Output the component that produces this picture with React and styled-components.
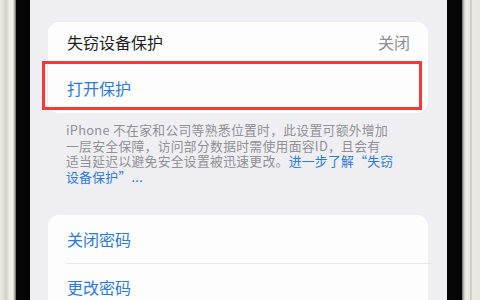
import React from "react";
import styled, { createGlobalStyle } from "styled-components";

const GlobalStyle = createGlobalStyle`
    html, body {
        margin: 0;
        padding: 0;
        background: #efeff3;
    }
    body {
        font-family: "Noto Sans CJK SC", "Noto Sans", sans-serif;
    }
`;

const Phone = styled.div`
    display: flex;
    width: 480px;
    height: 300px;
    overflow: hidden;
`;

const Frame = styled.div`
    width: ${({ w }) => w}px;
    flex-shrink: 0;
    background: ${({ side }) =>
        side === "left"
            ? "linear-gradient(90deg, #ece9e2 0px, #e2ded6 4px, #cfccc6 6px, #eeebe5 9px, #f2f0ec 13px, #9a9895 15px, #5a5a5a 16px)"
            : "linear-gradient(90deg, #6a6a6a 0px, #c9c7c3 2px, #efede8 4px, #e6e3dc 8px, #bdbab3 9px, #ebe8e1 10px, #e9e6df 18px)"};
`;

const Bezel = styled.div`
    width: ${({ w }) => w}px;
    flex-shrink: 0;
    background: #050505;
`;

const Screen = styled.div`
    flex: 1;
    background: #efeff3;
    padding: 22px 19px 0 18px;
    display: flex;
    flex-direction: column;
`;

const Card = styled.div`
    position: relative;
    background: #fdfdfd;
    border-radius: 11px;
    margin-top: ${({ top }) => top || 0}px;
`;

const Row = styled.div`
    position: relative;
    display: flex;
    align-items: center;
    justify-content: space-between;
    height: ${({ h }) => h}px;
    padding: 0 18px 0 19px;
    font-size: 16px;
    color: ${({ link }) => (link ? "#2c7bd3" : "#1d1d1f")};

    & + &::before {
        content: "";
        position: absolute;
        top: 0;
        left: 18px;
        right: -4px;
        height: 1px;
        background: #e8e8ec;
    }
`;

const Value = styled.span`
    color: #8e8e93;
    font-size: 16px;
`;

const Highlight = styled.div`
    position: absolute;
    left: -6px;
    right: 6px;
    top: -1px;
    bottom: 3px;
    border: 3px solid #f23a3a;
    pointer-events: none;
`;

const Footer = styled.p`
    margin: 9px 0 0;
    padding: 0 10px 0 18px;
    font-size: 12.8px;
    line-height: 15.5px;
    color: #909095;
    letter-spacing: 0.3px;
    white-space: nowrap;
`;

const Link = styled.span`
    color: #2c7bd3;
`;

export default function App() {
    return (
        <>
            <GlobalStyle />
            <Phone>
                <Frame side="left" w={16} />
                <Bezel w={14} />
                <Screen>
                    <Card>
                        <Row h={40}>
                            <span>失窃设备保护</span>
                            <Value>关闭</Value>
                        </Row>
                        <Row h={51} link>
                            <span>打开保护</span>
                            <Highlight />
                        </Row>
                    </Card>
                    <Footer>
                        iPhone 不在家和公司等熟悉位置时，此设置可额外增加
                        <br />
                        一层安全保障，访问部分数据时需使用面容ID，且会有
                        <br />
                        适当延迟以避免安全设置被迅速更改。<Link>进一步了解“失窃</Link>
                        <br />
                        <Link>设备保护”...</Link>
                    </Footer>
                    <Card top={31}>
                        <Row h={48} link>
                            <span>关闭密码</span>
                        </Row>
                        <Row h={48} link>
                            <span>更改密码</span>
                        </Row>
                    </Card>
                </Screen>
                <Bezel w={15} />
                <Frame side="right" w={18} />
            </Phone>
        </>
    );
}
